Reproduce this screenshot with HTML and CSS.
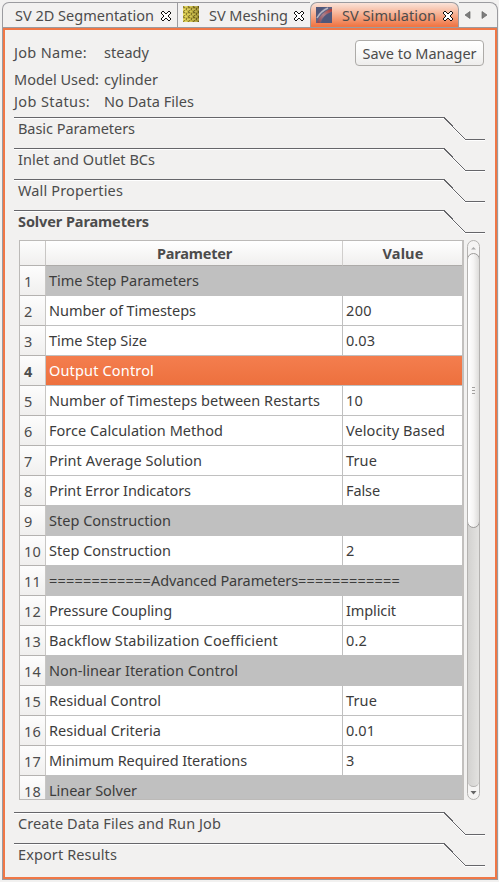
FILE: index.html
```html
<!DOCTYPE html>
<html lang="en">
<head>
<meta charset="utf-8">
<title>SV Simulation</title>
<link rel="stylesheet" href="styles.css">
</head>
<body>
<svg class="defs" width="0" height="0">
  <defs>
    <symbol id="close" viewBox="0 0 10 10">
      <path d="M1 1h2v1h1v1h2v-1h1v-1h2v2h-1v1h-1v2h1v1h1v2h-2v-1h-1v-1h-2v1h-1v1h-2v-2h1v-1h1v-2h-1v-1h-1z" fill="#fff"/>
      <path d="M1 0h2v1h-2zM7 0h2v1h-2zM0 1h1v2h-1zM3 1h1v1h-1zM6 1h1v1h-1zM9 1h1v2h-1zM4 2h2v1h-2zM1 3h1v1h-1zM8 3h1v1h-1zM2 4h1v2h-1zM7 4h1v2h-1zM1 6h1v1h-1zM8 6h1v1h-1zM0 7h1v2h-1zM4 7h2v1h-2zM9 7h1v2h-1zM3 8h1v1h-1zM6 8h1v1h-1zM1 9h2v1h-2zM7 9h2v1h-2z" fill="#111"/>
    </symbol>
    <symbol id="edge" viewBox="0 0 471 24">
      <path d="M0 1.5H430.5L451.5 23.5H471" fill="none" stroke="#fff"/>
      <path d="M0 .5H430L451.5 22.5H471" fill="none" stroke="#66666a"/>
    </symbol>
    <pattern id="mesh" width="5" height="5" patternUnits="userSpaceOnUse">
      <rect width="5" height="5" fill="#c2b344"/>
      <path d="M0 0h1v1h1v1h-2zM3 2h1v2h-1zM1 4h1v1h-1z" fill="#655a20"/>
      <path d="M2 0h2v1h-2zM0 3h2v1h-2zM4 3h1v1h-1z" fill="#e3d968"/>
    </pattern>
    <linearGradient id="shade"><stop offset="0" stop-color="#fff060" stop-opacity=".3"/><stop offset="1" stop-color="#5a4d10" stop-opacity=".4"/></linearGradient>
    <linearGradient id="vessel" x1="0" y1="1" x2="1" y2="0"><stop offset="0" stop-color="#8f4350"/><stop offset=".5" stop-color="#a8808c"/><stop offset="1" stop-color="#b03c38"/></linearGradient>
  </defs>
</svg>
<div class="window">
  <nav class="tabs">
    <div class="tab first"><span data-w="139">SV 2D Segmentation</span><svg class="x"><use href="#close"/></svg></div>
    <div class="tab second"><svg class="icon" viewBox="0 0 16 16"><rect width="16" height="16" fill="url(#mesh)"/><rect width="16" height="16" fill="url(#shade)"/></svg><span data-w="79">SV Meshing</span><svg class="x"><use href="#close"/></svg></div>
    <div class="tab active"><svg class="icon" viewBox="0 0 16 16"><rect width="16" height="16" fill="#50577a"/><path d="M0 11Q3 3 10 0H16V5Q8 7 5 16H0z" fill="#5d6283"/><path d="M2.500 16Q5 7 16 3" fill="none" stroke="url(#vessel)" stroke-width="3"/><path d="M1 11Q5 4 12 1" fill="none" stroke="#b9b5c2" stroke-width="1.5"/></svg><span data-w="94">SV Simulation</span><svg class="x"><use href="#close"/></svg></div>
    <div class="arrows"><svg viewBox="0 0 38 24"><path d="M11 8.500v7L6 12z M23 8.500v7l5-3.500z" fill="#7d7d7d" stroke="#666" stroke-width=".7"/></svg></div>
  </nav>
  <main class="pane">
    <header class="job">
      <dl>
        <dt><span data-w="73">Job Name:</span></dt><dd><span data-w="45">steady</span></dd>
        <dt><span data-w="85">Model Used:</span></dt><dd><span data-w="54">cylinder</span></dd>
        <dt><span data-w="76">Job Status:</span></dt><dd><span data-w="90">No Data Files</span></dd>
      </dl>
      <button><span data-w="114">Save to Manager</span></button>
    </header>
    <div class="section"><svg><use href="#edge"/></svg><span data-w="117">Basic Parameters</span></div>
    <div class="section"><svg><use href="#edge"/></svg><span data-w="137">Inlet and Outlet BCs</span></div>
    <div class="section"><svg><use href="#edge"/></svg><span data-w="105">Wall Properties</span></div>
    <div class="section open"><svg><use href="#edge"/></svg><span data-w="131">Solver Parameters</span></div>
    <div class="view">
      <div class="grid">
        <div class="row head"><i></i><b><span data-w="75">Parameter</span></b><b><span data-w="41">Value</span></b></div>
        <div class="row group"><i>1</i><p><span data-w="150">Time Step Parameters</span></p></div>
        <div class="row"><i>2</i><p><span data-w="147">Number of Timesteps</span></p><p><span data-w="26">200</span></p></div>
        <div class="row"><i>3</i><p><span data-w="98">Time Step Size</span></p><p><span data-w="29">0.03</span></p></div>
        <div class="row group selected"><i>4</i><p><span data-w="105">Output Control</span></p></div>
        <div class="row"><i>5</i><p><span data-w="271">Number of Timesteps between Restarts</span></p><p><span data-w="17">10</span></p></div>
        <div class="row"><i>6</i><p><span data-w="174">Force Calculation Method</span></p><p><span data-w="99">Velocity Based</span></p></div>
        <div class="row"><i>7</i><p><span data-w="153">Print Average Solution</span></p><p><span data-w="31">True</span></p></div>
        <div class="row"><i>8</i><p><span data-w="142">Print Error Indicators</span></p><p><span data-w="34">False</span></p></div>
        <div class="row group"><i>9</i><p><span data-w="122">Step Construction</span></p></div>
        <div class="row"><i><span data-w="17">10</span></i><p><span data-w="122">Step Construction</span></p><p><span>2</span></p></div>
        <div class="row group"><i><span data-w="17">11</span></i><p><span data-w="102">============</span><span data-w="147">Advanced Parameters</span><span data-w="102">============</span></p></div>
        <div class="row"><i><span data-w="17">12</span></i><p><span data-w="123">Pressure Coupling</span></p><p><span data-w="50">Implicit</span></p></div>
        <div class="row"><i><span data-w="17">13</span></i><p><span data-w="229">Backflow Stabilization Coefficient</span></p><p><span data-w="21">0.2</span></p></div>
        <div class="row group"><i><span data-w="17">14</span></i><p><span data-w="189">Non-linear Iteration Control</span></p></div>
        <div class="row"><i><span data-w="17">15</span></i><p><span data-w="112">Residual Control</span></p><p><span data-w="31">True</span></p></div>
        <div class="row"><i><span data-w="17">16</span></i><p><span data-w="112">Residual Criteria</span></p><p><span data-w="29">0.01</span></p></div>
        <div class="row"><i><span data-w="17">17</span></i><p><span data-w="198">Minimum Required Iterations</span></p><p><span>3</span></p></div>
        <div class="row group"><i><span data-w="17">18</span></i><p><span data-w="88">Linear Solver</span></p></div>
      </div>
      <div class="scroll">
        <svg class="up" viewBox="0 0 11 12"><path d="M3 8.500h5L5.500 6z" fill="#aaa"/></svg>
        <div class="thumb"><span class="grip"></span></div>
        <div class="space"></div>
        <svg class="down" viewBox="0 0 11 12"><path d="M2.500 4h6L5.500 7.500z" fill="#666"/></svg>
      </div>
    </div>
    <div class="section"><svg><use href="#edge"/></svg><span data-w="203">Create Data Files and Run Job</span></div>
    <div class="section"><svg><use href="#edge"/></svg><span data-w="99">Export Results</span></div>
  </main>
</div>
<script src="fit.js"></script>
</body>
</html>
```
FILE: styles.css
```css
* { box-sizing: border-box; }
body { margin: 0; background: #f2f1f0; color: #4c4c4c; font: 14.5px/20px "Noto Sans", "Open Sans", sans-serif; }
.defs { position: absolute; }
svg { display: block; flex: none; }
span { white-space: pre; }
.window { width: 499px; height: 882px; padding: 2px 1px 2px 2px; overflow: hidden; }

.tabs { display: flex; height: 25px; }
.tab { display: flex; align-items: center; height: 25px; border-top: 1px solid #9b9b9f; border-right: 1px solid #9b9b9f; padding-bottom: 1px; }
.tab.first { width: 176px; padding-left: 12px; border-left: 1px solid #9b9b9f; border-top-left-radius: 7px; }
.tab.second { width: 132px; padding-left: 5px; border-right: 0; }
.tab.active { width: 149px; padding-left: 5px; border-left: 1px solid #9b9b9f; border-radius: 7px 7px 0 0; background: linear-gradient(#fae3d9, #f7bda4 35%, #f07746 95%); }
.tab .x { width: 10px; height: 10px; margin: 3px 0 0 7px; shape-rendering: crispEdges; }
.tab .icon { width: 16px; height: 16px; margin: 0 10px 0 0; }
.tab.second .icon { margin-top: -2px; }
.tab.second .x { margin-left: 6px; }
.arrows { width: 39px; border: 1px solid #9b9b9f; border-width: 1px 1px 0 0; border-top-right-radius: 8px; }
.arrows svg { width: 38px; height: 24px; }

.pane { width: 496px; height: 853px; border: 1px solid #9b9b9f; box-shadow: inset 0 0 0 2px #f07746; padding: 2px 11px 2px 11px; }
.job { display: flex; justify-content: space-between; height: 87px; }
dl { display: grid; grid-template-columns: 90px auto; grid-template-rows: 27px 22px 22px; margin: 12px 0 0; line-height: 20px; align-content: start; }
dt, dd { margin: 0; }
button { width: 129px; height: 26px; margin: 10px 2px 0 0; padding: 0 0 1px; border: 1px solid #adaba8; border-radius: 4px; background: linear-gradient(#fff, #f8f8f7 55%, #eeedec); color: inherit; font: inherit; line-height: 22px; text-align: center; }

.section { position: relative; height: 31px; padding: 1px 0 0 4px; }
.section svg { position: absolute; left: 0; top: 0; width: 471px; height: 24px; shape-rendering: crispEdges; }
.section.open { height: 30px; font-weight: bold; }

.view { display: flex; justify-content: space-between; width: 461px; height: 560px; margin: 0 0 12px 5px; }
.grid { width: 445px; overflow: hidden; border: 1px solid #bcbab8; border-right: 2px solid #c2c0be; background: #fff; color: #3c3c3c; }
.row { display: grid; grid-template-columns: 26px 297px 119px; grid-template-rows: 30px; height: 30px; line-height: 29px; }
.row p { margin: 0; padding-left: 3px; border-right: 1px solid #c0c0c0; border-bottom: 1px solid #c0c0c0; white-space: nowrap; }
.row p:last-child { border-right: 0; }
.row i { padding-left: 4px; border-right: 1px solid #c8c6c4; border-bottom: 1px solid #b4b2b0; background: linear-gradient(#fdfdfd, #f0efee); color: #4c4c4c; font-style: normal; line-height: 31px; }
.row.head { grid-template-rows: 25px; height: 25px; line-height: 25px; text-align: center; }
.row.head b { padding-left: 1px; border-right: 1px solid #d0cecc; border-bottom: 1px solid #adaba9; background: linear-gradient(#fff, #f0efee); color: #4c4c4c; }
.row.head b:last-child { border-right: 0; }
.row.group p { grid-column: 2 / 4; background: #c0c0c0; }
.row.selected p { background: linear-gradient(#f47e4e, #ed703e) padding-box; color: #fff; }
.row.selected i { font-weight: bold; }

.scroll { display: flex; flex-direction: column; width: 13px; border: 1px solid #b4b2b0; border-radius: 7px; background: #f5f4f3; overflow: hidden; }
.up { width: 11px; height: 12px; }
.down { width: 11px; height: 12px; }
.thumb { display: flex; align-items: center; justify-content: center; height: 275px; margin: 0 -1px; border: 1px solid #9c9a98; border-radius: 7px; background: linear-gradient(90deg, #fff, #f5f4f3 50%, #dddcda); flex: none; z-index: 1; }
.grip { width: 3px; height: 7px; background: repeating-linear-gradient(#a2a09e 0 1px, transparent 1px 3px); }
.space { flex: 1; margin-top: -7px; border-bottom: 1px solid #b4b2b0; border-radius: 0 0 6px 6px; background: linear-gradient(90deg, #d3d2d0, #e3e2e0); }
```
FILE: fit.js
```js
document.querySelectorAll('[data-w]').forEach(function (el) {
  var gap = Number(el.dataset.w) - el.getBoundingClientRect().width;
  el.style.letterSpacing = gap / el.textContent.length + 'px';
});
```
